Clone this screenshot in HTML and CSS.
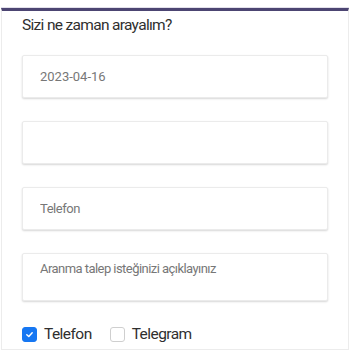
FILE: index.html
```html
<!DOCTYPE html>
<html lang="tr">
<head>
  <meta charset="UTF-8">
  <meta name="viewport" content="width=device-width, initial-scale=1.0">
  <title>Arama Talebi</title>
  <link rel="stylesheet" href="styles.css">
</head>
<body>
  <div class="call-card">
    <h2 class="call-title">Sizi ne zaman arayalım?</h2>
    <form class="call-form">
      <input type="text" class="field field-date" placeholder="2023-04-16">
      <input type="text" class="field" placeholder="">
      <input type="text" class="field" placeholder="Telefon">
      <textarea class="field field-area" placeholder="Aranma talep isteğinizi açıklayınız"></textarea>

      <!-- Contact channel -->
      <div class="channels">
        <label class="channel">
          <span class="box checked">
            <svg width="9" height="9" viewBox="0 0 10 10"><path d="M2 5.2 L4.2 7.3 L8 3" fill="none" stroke="#fff" stroke-width="1.6" stroke-linecap="round" stroke-linejoin="round"/></svg>
          </span>
          Telefon
        </label>
        <label class="channel">
          <span class="box"></span>
          Telegram
        </label>
      </div>
    </form>
  </div>
</body>
</html>
```

FILE: styles.css
```css
body {
  margin: 0;
  padding: 0;
  font-family: Roboto, "Noto Sans", Arial, sans-serif;
  background: #fff;
  overflow: hidden;
}

.call-card {
  box-sizing: border-box;
  height: 342px;
  margin: 8px 1px 0;
  border: 1px solid #ececec;
  border-top: 3px solid #4c4572;
  box-shadow: 0 -1px 0 #e2e0ea;
  padding: 4px 20px 0;
}

.call-title {
  margin: 0 0 20px;
  font-size: 15.5px;
  line-height: 20px;
  letter-spacing: -0.68px;
  font-weight: 400;
  color: #2f2f2f;
}

.call-form {
  display: flex;
  flex-direction: column;
  gap: 23px;
}

.field {
  display: block;
  box-sizing: border-box;
  width: 100%;
  height: 43px;
  margin: 0;
  padding: 0 17px;
  border: 1px solid #ebebeb;
  border-radius: 2px;
  box-shadow: 0 1px 2px rgba(0, 0, 0, 0.16);
  font-family: inherit;
  font-size: 13px;
  letter-spacing: -0.45px;
  color: #333;
  background: #fff;
  outline: none;
}

.field::placeholder {
  color: #777;
}

.field-date {
  letter-spacing: 0;
}

.field-area {
  height: 48px;
  padding-top: 7px;
  line-height: 16px;
  letter-spacing: -0.55px;
  resize: none;
}

.channels {
  display: flex;
  gap: 18px;
  margin-top: 1px;
}

.channel {
  display: flex;
  align-items: center;
  gap: 7px;
  font-size: 15.5px;
  letter-spacing: -0.55px;
  color: #2f2f2f;
}

.box {
  display: flex;
  align-items: center;
  justify-content: center;
  box-sizing: border-box;
  width: 15px;
  height: 15px;
  border: 1px solid #cfcfcf;
  border-radius: 3px;
  background: #fff;
}

.box.checked {
  background: #1677f2;
  border-color: #1677f2;
}
```
